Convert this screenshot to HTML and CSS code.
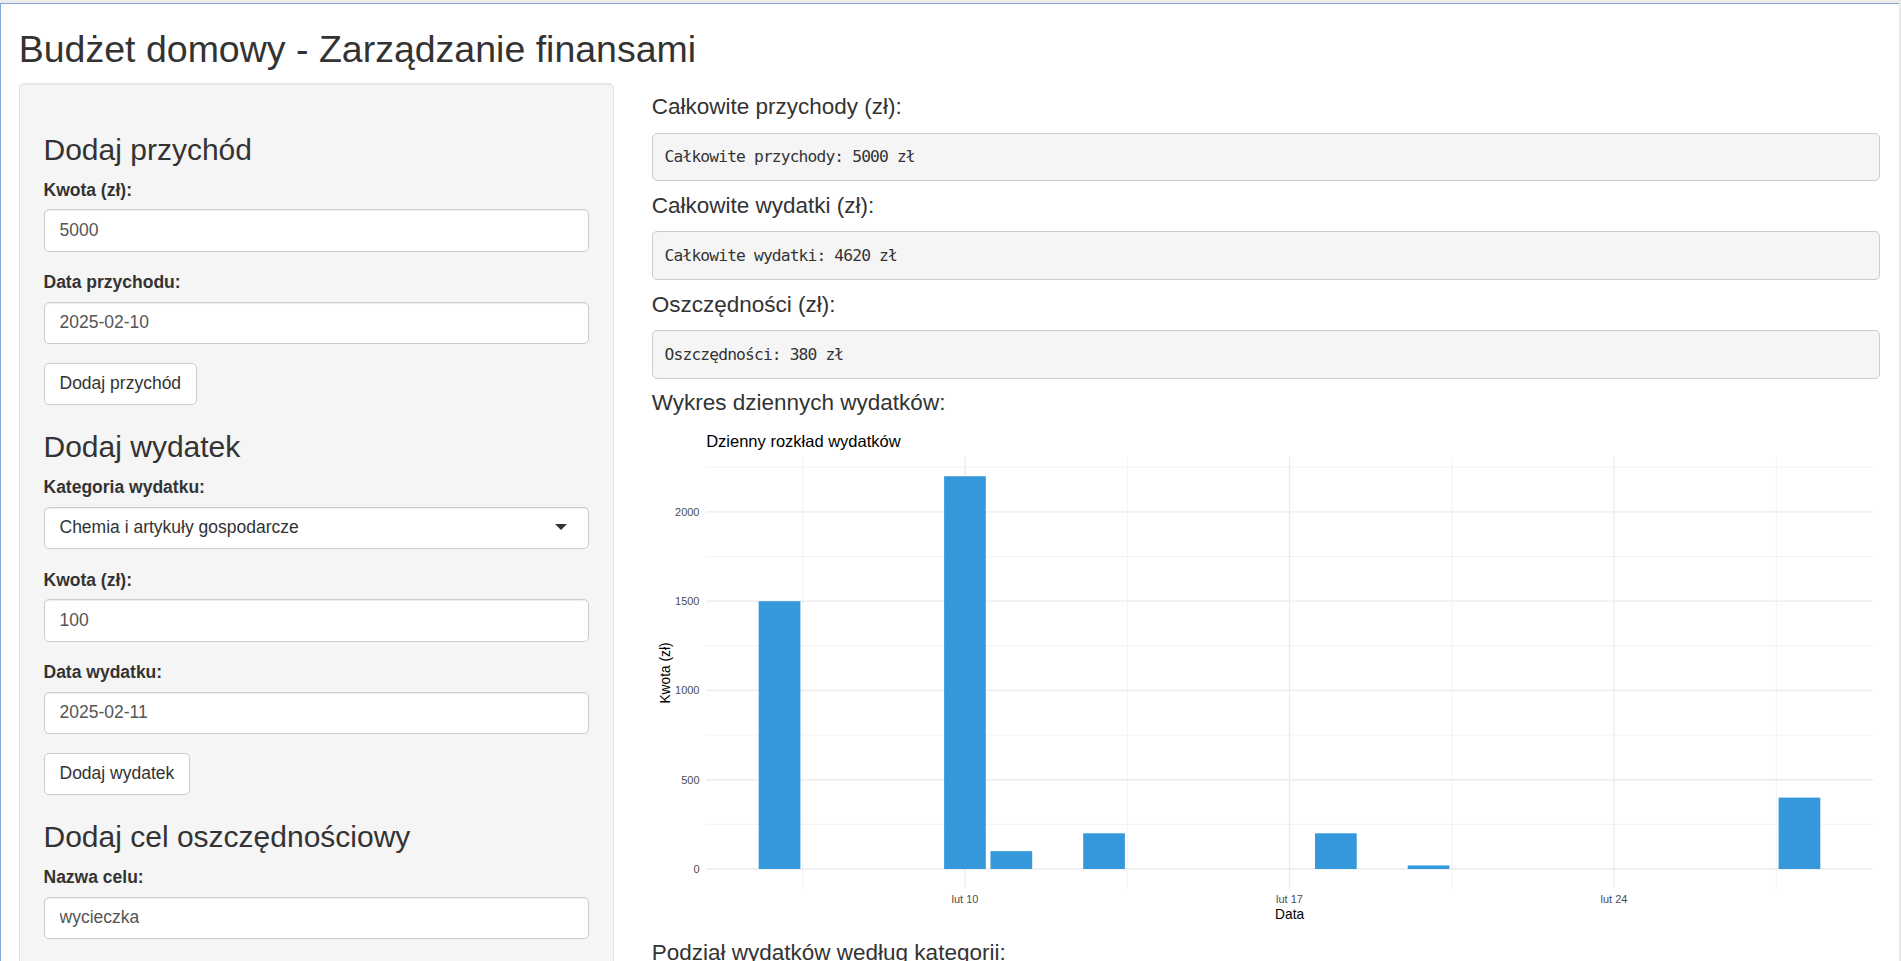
FILE: index.html
```html
<!DOCTYPE html>
<html lang="pl">
<head>
<meta charset="utf-8">
<title>Budżet domowy</title>
<link rel="stylesheet" href="styles.css">
</head>
<body>
<div class="page">
  <div class="topbar"></div>
  <div class="frame">
    <div class="container-fluid">
      <h2 class="page-title">Budżet domowy - Zarządzanie finansami</h2>
      <div class="row">
        <div class="col-side">
          <form class="well">
            <h3 class="section-title">Dodaj przychód</h3>
            <div class="form-group">
              <label class="control-label">Kwota (zł):</label>
              <input class="form-control" type="text" value="5000">
            </div>
            <div class="form-group">
              <label class="control-label">Data przychodu:</label>
              <input class="form-control" type="text" value="2025-02-10">
            </div>
            <button type="button" class="btn">Dodaj przychód</button>

            <h3 class="section-title">Dodaj wydatek</h3>
            <div class="form-group">
              <label class="control-label">Kategoria wydatku:</label>
              <div class="select-box">
                <span class="select-item">Chemia i artykuły gospodarcze</span>
                <span class="caret"></span>
              </div>
            </div>
            <div class="form-group">
              <label class="control-label">Kwota (zł):</label>
              <input class="form-control" type="text" value="100">
            </div>
            <div class="form-group">
              <label class="control-label">Data wydatku:</label>
              <input class="form-control" type="text" value="2025-02-11">
            </div>
            <button type="button" class="btn">Dodaj wydatek</button>

            <h3 class="section-title">Dodaj cel oszczędnościowy</h3>
            <div class="form-group">
              <label class="control-label">Nazwa celu:</label>
              <input class="form-control" type="text" value="wycieczka">
            </div>
          </form>
        </div>

        <div class="col-main">
          <h4 class="stat-title">Całkowite przychody (zł):</h4>
          <pre class="stat">Całkowite przychody: 5000 zł</pre>
          <h4 class="stat-title">Całkowite wydatki (zł):</h4>
          <pre class="stat">Całkowite wydatki: 4620 zł</pre>
          <h4 class="stat-title">Oszczędności (zł):</h4>
          <pre class="stat">Oszczędności: 380 zł</pre>
          <h4 class="stat-title">Wykres dziennych wydatków:</h4>
          <div class="plot">
            <svg class="chart" width="100%" height="500" xmlns="http://www.w3.org/2000/svg">
              <g class="grid-minor">
                <line x1="54.2" y1="395.37" x2="1221" y2="395.37"/>
                <line x1="54.2" y1="306.1" x2="1221" y2="306.1"/>
                <line x1="54.2" y1="216.83" x2="1221" y2="216.83"/>
                <line x1="54.2" y1="127.57" x2="1221" y2="127.57"/>
                <line x1="54.2" y1="38.3" x2="1221" y2="38.3"/>
                <line x1="150.7" y1="28" x2="150.7" y2="459.3"/>
                <line x1="475.3" y1="28" x2="475.3" y2="459.3"/>
                <line x1="799.8" y1="28" x2="799.8" y2="459.3"/>
                <line x1="1124.3" y1="28" x2="1124.3" y2="459.3"/>
              </g>
              <g class="grid-major">
                <line x1="54.2" y1="440" x2="1221" y2="440"/>
                <line x1="54.2" y1="350.73" x2="1221" y2="350.73"/>
                <line x1="54.2" y1="261.47" x2="1221" y2="261.47"/>
                <line x1="54.2" y1="172.2" x2="1221" y2="172.2"/>
                <line x1="54.2" y1="82.93" x2="1221" y2="82.93"/>
                <line x1="313" y1="28" x2="313" y2="459.3"/>
                <line x1="637.5" y1="28" x2="637.5" y2="459.3"/>
                <line x1="962" y1="28" x2="962" y2="459.3"/>
              </g>
              <g class="bars">
                <rect x="106.7" y="172.2" width="41.7" height="267.8"/>
                <rect x="292.1" y="47.23" width="41.7" height="392.77"/>
                <rect x="338.5" y="422.15" width="41.7" height="17.85"/>
                <rect x="431.2" y="404.3" width="41.7" height="35.7"/>
                <rect x="663.0" y="404.3" width="41.7" height="35.7"/>
                <rect x="755.7" y="436.43" width="41.7" height="3.57"/>
                <rect x="1126.6" y="368.6" width="41.7" height="71.4"/>
              </g>
              <g class="tick-y">
                <text x="47.5" y="444">0</text>
                <text x="47.5" y="354.7">500</text>
                <text x="47.5" y="265.4">1000</text>
                <text x="47.5" y="176.1">1500</text>
                <text x="47.5" y="86.9">2000</text>
              </g>
              <g class="tick-x">
                <text x="313" y="474">lut 10</text>
                <text x="637.5" y="474">lut 17</text>
                <text x="962" y="474">lut 24</text>
              </g>
              <text class="axis-title-x" x="637.6" y="489.5">Data</text>
              <text class="axis-title-y" transform="translate(17.5 244) rotate(-90)">Kwota (zł)</text>
              <text class="plot-title" x="54.2" y="18">Dzienny rozkład wydatków</text>
            </svg>
          </div>
          <h4 class="stat-title">Podział wydatków według kategorii:</h4>
        </div>
      </div>
    </div>
  </div>
</div>
</body>
</html>
```
FILE: styles.css
```css
html, body {
  margin: 0;
  padding: 0;
  height: 100%;
  overflow: hidden;
}

body {
  font-family: "Liberation Sans", Arial, Helvetica, sans-serif;
  font-size: 17.5px;
  line-height: 1.42857;
  color: #333;
  background: #fff;
}

*, *::before, *::after {
  box-sizing: border-box;
}

.page {
  height: 100%;
  border-right: 2px solid #e8e8e8;
  display: flex;
  flex-direction: column;
}

.topbar {
  height: 3px;
  background: #ececec;
  flex: none;
}

.frame {
  flex: 1;
  border-top: 1px solid #86a9dc;
  box-shadow: inset 1px 0 0 #86a9dc;
  overflow: hidden;
}

.container-fluid {
  padding: 0 18.75px;
}

.page-title {
  margin: 25px 0 12.5px;
  font-size: 37.5px;
  font-weight: 500;
  line-height: 1.1;
}

.row {
  display: flex;
  margin: 0 -18.75px;
}

.col-side {
  width: 33.3333%;
  padding: 0 18.75px;
}

.col-main {
  width: 66.6667%;
  padding: 0 18.75px;
}

.well {
  margin: 0 0 25px;
  padding: 23.75px 23.75px 60px;
  background: #f5f5f5;
  border: 1px solid #e3e3e3;
  border-radius: 5px;
  box-shadow: inset 0 1px 1px rgba(0, 0, 0, 0.05);
}

.section-title {
  margin: 25px 0 12.5px;
  font-size: 30px;
  font-weight: 500;
  line-height: 1.1;
}

.form-group {
  margin-bottom: 18.75px;
}

.control-label {
  display: inline-block;
  max-width: 100%;
  margin-bottom: 6.25px;
  font-weight: 700;
}

.form-control {
  display: block;
  width: 100%;
  height: 42.5px;
  padding: 7.5px 15px;
  font-family: inherit;
  font-size: 17.5px;
  line-height: 1.42857;
  color: #555;
  background: #fff;
  border: 1px solid #ccc;
  border-radius: 5px;
  box-shadow: inset 0 1px 1px rgba(0, 0, 0, 0.075);
  outline: none;
}

.select-box {
  position: relative;
  height: 42.5px;
  padding: 7.5px 15px;
  background: #fff;
  border: 1px solid #ccc;
  border-radius: 5px;
  box-shadow: inset 0 1px 1px rgba(0, 0, 0, 0.075);
  color: #333;
}

.select-item {
  display: block;
  line-height: 25px;
}

.caret {
  position: absolute;
  right: 21px;
  top: 50%;
  margin-top: -4px;
  width: 0;
  height: 0;
  border-style: solid;
  border-width: 6.25px 6.25px 0 6.25px;
  border-color: #333 transparent transparent transparent;
}

.btn {
  display: inline-block;
  padding: 7.5px 15px;
  font-family: inherit;
  font-size: 17.5px;
  line-height: 1.42857;
  color: #333;
  background: #fff;
  border: 1px solid #ccc;
  border-radius: 5px;
  cursor: pointer;
}

.stat-title {
  margin: 12.5px 0;
  font-size: 22.5px;
  font-weight: 500;
  line-height: 1.1;
}

.stat {
  margin: 0 0 12.5px;
  padding: 11.875px;
  font-family: "DejaVu Sans Mono", "Liberation Mono", monospace;
  font-size: 16.25px;
  letter-spacing: -0.85px;
  line-height: 1.42857;
  color: #333;
  background: #f5f5f5;
  border: 1px solid #ccc;
  border-radius: 5px;
  white-space: pre;
  overflow: hidden;
}

.plot {
  height: 500px;
}

.chart {
  display: block;
  font-family: "Liberation Sans", Arial, sans-serif;
}

.grid-minor line {
  stroke: #ededed;
  stroke-width: 0.7;
}

.grid-major line {
  stroke: #ebebeb;
  stroke-width: 1.3;
}

.bars rect {
  fill: #3498db;
}

.tick-y text {
  font-size: 11px;
  fill: #4d4d4d;
  text-anchor: end;
}

.tick-x text {
  font-size: 11px;
  fill: #4d4d4d;
  text-anchor: middle;
}

.axis-title-x {
  font-size: 13.75px;
  fill: #000;
  text-anchor: middle;
}

.axis-title-y {
  font-size: 13.75px;
  fill: #000;
  text-anchor: middle;
}

.plot-title {
  font-size: 16.5px;
  fill: #000;
}
```
